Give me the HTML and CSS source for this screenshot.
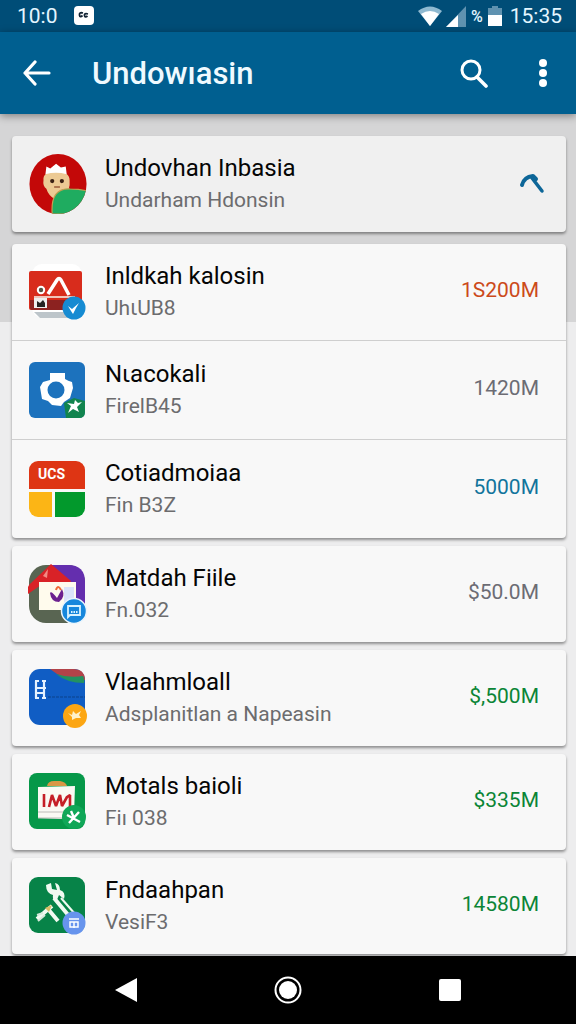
FILE: index.html
```
<!DOCTYPE html>
<html lang="id">
<head>
  <meta charset="UTF-8">
  <meta name="viewport" content="width=device-width, initial-scale=1">
  <title>Undowıasin</title>
  <link rel="stylesheet" href="styles.css">
</head>
<body>

  <div class="status">
    <span>10:0</span>
    <svg class="notif" width="20" height="20" viewBox="0 0 20 20">
      <rect width="20" height="19" rx="4" fill="#fff"/>
      <path d="M9 7q-4-1-3.500 2t3 .500M14 8q-4-1-3.500 1.500t3 .500" fill="none" stroke="#123" stroke-width="1.800"/>
    </svg>
    <span class="space"></span>
    <svg width="24" height="20" viewBox="0 0 24 20">
      <path d="M0 5Q12-4 24 5L12 20Z" fill="#8fb9d0"/>
      <path d="M3 8Q12 2 21 8L12 20Z" fill="#fff"/>
    </svg>
    <svg width="20" height="21" viewBox="0 0 20 21">
      <path d="M0 21L20 0V21Z" fill="#5f92b0"/>
      <path d="M0 21L12 9V21Z" fill="#fff"/>
    </svg>
    <span class="percent">%</span>
    <svg class="battery" width="14" height="20" viewBox="0 0 14 20">
      <path d="M0 2h4V0h6v2h4v18H0z" fill="#5f92b0"/>
      <path d="M0 9h14v11H0z" fill="#fff"/>
    </svg>
    <span>15:35</span>
  </div>

  <header class="appbar">
    <button class="icon-btn" aria-label="Kembali">
      <svg width="28" height="26" viewBox="0 0 28 26" fill="none" stroke="#fff" stroke-width="3.200" stroke-linecap="round" stroke-linejoin="round">
        <path d="M26 13H2M12 2L2 13L12 24"/>
      </svg>
    </button>
    <h1>Undowıasin</h1>
    <button class="icon-btn" aria-label="Cari">
      <svg width="28" height="30" viewBox="0 0 28 30" fill="none" stroke="#fff">
        <circle cx="11" cy="12" r="9" stroke-width="3"/>
        <path d="M17 19L26 28" stroke-width="3.600" stroke-linecap="round"/>
      </svg>
    </button>
    <button class="icon-btn more" aria-label="Menu">
      <svg width="8" height="28" viewBox="0 0 8 28" fill="#fff">
        <circle cx="4" cy="4" r="4"/><circle cx="4" cy="14" r="4"/><circle cx="4" cy="24" r="4"/>
      </svg>
    </button>
  </header>

  <main>
    <section class="card top">
      <div class="row">
        <svg class="logo" viewBox="0 0 60 62">
          <clipPath id="avatar"><ellipse cx="30" cy="31" rx="29.500" ry="31"/></clipPath>
          <g clip-path="url(#avatar)">
            <rect width="60" height="62" fill="#c30808"/>
            <path d="M15 27Q14 18 28 18T42 27Q43 38 36 43L27 47Q20 43 18 36Q14 33 15 27Z" fill="#ecca94"/>
            <path d="M17 21L18 13L22 15L28 10L33 14L38 13L39 21Q28 18 17 21Z" fill="#fff"/>
            <circle cx="24" cy="28" r="2.200" fill="#3a2114"/>
            <circle cx="34" cy="28" r="2.200" fill="#3a2114"/>
            <path d="M26 34H32" stroke="#9a5a3a" stroke-width="1.500"/>
            <path d="M24 62Q22 35 42 36Q51 36 60 38V62Z" fill="#1fac60" stroke="#c3a052" stroke-width="1.200"/>
          </g>
        </svg>
        <div class="text"><h2>Undovhan Inbasia</h2><p>Undarham Hdonsin</p></div>
        <svg class="pick" width="26" height="22" viewBox="0 0 26 22" fill="none" stroke="#0d6698" stroke-linecap="round">
          <path d="M3 12Q5 4 14 3L17 6" stroke-width="4" stroke-linejoin="round"/>
          <path d="M13 5L23 18" stroke-width="3.500"/>
        </svg>
      </div>
    </section>

    <section class="card group">
      <div class="row">
        <svg class="logo" viewBox="0 0 60 60">
          <rect x="4" y="2" width="50" height="54" rx="10" fill="#fff"/>
          <path d="M6 50H50L44 56H12Z" fill="#bdc5ca"/>
          <rect x="1" y="9" width="53" height="39" rx="2" fill="#d82c1c"/>
          <path d="M2 38H54V46Q54 48 52 48H4Q2 48 2 46Z" fill="#8c2220"/>
          <path d="M6 35H47" stroke="#efc5ba" stroke-width="2"/>
          <path d="M20 32L29 18Q31 15 33 18L41 33" fill="none" stroke="#fff" stroke-width="3.500" stroke-linejoin="round"/>
          <circle cx="13" cy="28" r="3.200" fill="#554" stroke="#fff" stroke-width="2"/>
          <rect x="6" y="36" width="13" height="10" fill="#eee"/>
          <path d="M9 39l3 2 3-3 2 3v4H9z" fill="#222"/>
          <circle cx="46" cy="46" r="11.500" fill="#168bd2"/>
          <path d="M40 44L44 47L51 41L48 46L45 52L43 49Z" fill="#fff"/>
        </svg>
        <div class="text"><h2>Inldkah kalosin</h2><p>UhɩUB8</p></div>
        <span class="amount orange">1S200M</span>
      </div>
      <div class="row">
        <svg class="logo" viewBox="0 0 60 60">
          <rect x="1" y="2" width="56" height="56" rx="6" fill="#1c72bd"/>
          <path d="M22 13H37V19Q40 21 44 22L45 28L42 38L36 42L33 46L24 45L20 41L14 39L12 27L15 22L22 20Z" fill="#fff"/>
          <circle cx="28" cy="30" r="8.500" fill="#1c72bd"/>
          <path d="M36 43L46 38L57 41V52Q57 58 51 58H38Z" fill="#11844e"/>
          <path d="M39 43L46 44L47 40L50 43L54 42L49 47L51 52L45 49L40 53L43 46Z" fill="#fff"/>
        </svg>
        <div class="text"><h2>Nɩacokali</h2><p>FirelB45</p></div>
        <span class="amount">1420M</span>
      </div>
      <div class="row">
        <svg class="logo" viewBox="0 0 60 60">
          <clipPath id="tile"><rect x="1" y="2" width="56" height="56" rx="9"/></clipPath>
          <g clip-path="url(#tile)">
            <rect width="60" height="30" fill="#de3514"/>
            <rect y="33" width="24" height="27" fill="#fcb515"/>
            <rect x="27" y="33" width="33" height="27" fill="#02992c"/>
          </g>
          <text class="logo-text" x="10" y="20">UCS</text>
        </svg>
        <div class="text"><h2>Cotiadmoiaa</h2><p>Fin B3Z</p></div>
        <span class="amount blue">5000M</span>
      </div>
    </section>

    <section class="card">
      <div class="row">
        <svg class="logo" viewBox="0 0 60 60">
          <rect x="1" y="1" width="56" height="58" rx="17" fill="#596552"/>
          <path d="M24 1H40Q57 1 57 18V46H30Z" fill="#642eae"/>
          <path d="M23 0L43 17L41 21H13L0 30Q-2 23 3 19Z" fill="#d92227"/>
          <path d="M15 12L20 5L19 14Z" fill="#f28b83"/>
          <rect x="11" y="18" width="37" height="28" fill="#fffbed"/>
          <rect x="36" y="23" width="10" height="17" fill="#dbe4fa"/>
          <path d="M22 29Q23 26 29 34L34 25Q38 33 31 38Q23 38 22 29Z" fill="#6d218f"/>
          <path d="M28 26Q30 20 33 26" fill="none" stroke="#ef6b38" stroke-width="2"/>
          <circle cx="46" cy="47" r="12.500" fill="#1687dc" stroke="#e9f5fc" stroke-width="1.500"/>
          <path d="M40 42H52V51H42L40 53Z" fill="none" stroke="#d8f3ff" stroke-width="1.800"/>
          <path d="M43 48H50" stroke="#d8f3ff" stroke-width="2" stroke-dasharray="1.500 1"/>
        </svg>
        <div class="text"><h2>Matdah Fiile</h2><p>Fn.032</p></div>
        <span class="amount">$50.0M</span>
      </div>
    </section>

    <section class="card">
      <div class="row">
        <svg class="logo" viewBox="0 0 60 60">
          <rect x="1" y="1" width="56" height="56" rx="11" fill="#105dc4"/>
          <path d="M22 1H46Q56 1 57 11V12Q36 13 22 1Z" fill="#b34349"/>
          <path d="M28 6Q40 10 55 8Q57 12 56 15Q39 15 28 6Z" fill="#239260"/>
          <path d="M8 13V30M16 12V30M7 13H11M14 13H18M7 20H18M7 25H17M7 30H11M14 30H18" stroke="#e5f2ff" stroke-width="2.200"/>
          <path d="M20 29H57" stroke="#0b438b" stroke-dasharray="3 1"/>
          <circle cx="47" cy="48" r="12" fill="#fca613"/>
          <path d="M40 45L44 47L45 43L48 46L53 43L51 47L53 50L48 50L44 52L44 49Z" fill="#fff1ca"/>
        </svg>
        <div class="text"><h2>Vlaahmloall</h2><p>Adsplanitlan a Napeasin</p></div>
        <span class="amount green">$,500M</span>
      </div>
    </section>

    <section class="card">
      <div class="row">
        <svg class="logo" viewBox="0 0 60 60">
          <rect x="1" y="1" width="56" height="56" rx="8" fill="#069849"/>
          <path d="M10 15L47 14L46 43L33 47L10 46Z" fill="#faf9f3"/>
          <path d="M10 40H40M10 46H36" stroke="#bdbcb8"/>
          <path d="M19 14Q20 9 26 9H32Q38 10 39 14Z" fill="#d99745"/>
          <path d="M16 22V35M21 35L24 23L28 34L32 23L34 34L39 25L42 23V35" fill="none" stroke="#c51f27" stroke-width="2.600" stroke-linejoin="bevel"/>
          <circle cx="46" cy="45" r="12" fill="#10a758"/>
          <path d="M39 43L52 50M41 51L51 40M43 39L46 46" stroke="#fff" stroke-width="2.400"/>
        </svg>
        <div class="text"><h2>Motals baioli</h2><p>Fiı 038</p></div>
        <span class="amount green">$335M</span>
      </div>
    </section>

    <section class="card">
      <div class="row">
        <svg class="logo" viewBox="0 0 60 60">
          <rect x="1" y="1" width="56" height="56" rx="9" fill="#078348"/>
          <path d="M18 9L23 7L24 13L29 14L27 7Q32 8 32 14Q38 16 36 23L31 19L28 26Q24 24 25 19Q18 17 18 9Z" fill="#f1faf1"/>
          <path d="M26 22L46 46M24 30L18 35L9 43M20 33L30 45" stroke="#f1faf1" stroke-width="4" fill="none"/>
          <path d="M33 22L47 38" stroke="#f1faf1" stroke-width="2"/>
          <path d="M17 32L24 29L21 36Z" fill="#d9bd65"/>
          <path d="M9 39L15 37M10 45L17 39" stroke="#d7e9db" stroke-width="2"/>
          <circle cx="46" cy="47" r="11.500" fill="#6794ed"/>
          <path d="M41 43H51M42 46H50V51H42ZM46 46V52" fill="none" stroke="#fff" stroke-width="1.500"/>
        </svg>
        <div class="text"><h2>Fndaahpan</h2><p>VesiF3</p></div>
        <span class="amount green">14580M</span>
      </div>
    </section>
  </main>

  <nav class="navbar">
    <button class="nav-btn" aria-label="Kembali"><svg width="22" height="26" viewBox="0 0 22 26"><path d="M0 13L22 1V25Z" fill="#fff"/></svg></button>
    <button class="nav-btn" aria-label="Beranda"><svg width="28" height="28" viewBox="0 0 28 28"><circle cx="14" cy="14" r="12.500" fill="none" stroke="#fff" stroke-width="2"/><circle cx="14" cy="14" r="9" fill="#fff"/></svg></button>
    <button class="nav-btn" aria-label="Terbaru"><svg width="22" height="22" viewBox="0 0 22 22"><rect width="22" height="22" rx="2" fill="#fff"/></svg></button>
  </nav>

</body>
</html>
```
FILE: styles.css
```
* {
  box-sizing: border-box;
}

body {
  margin: 0;
  min-height: 100vh;
  display: flex;
  flex-direction: column;
  background: #ededee;
  font-family: Roboto, "Noto Sans", sans-serif;
}

h1, h2, p {
  margin: 0;
  font-weight: 400;
}

button {
  padding: 0;
  border: none;
  background: none;
  cursor: pointer;
}

svg {
  display: block;
  flex: none;
}

.status {
  display: flex;
  align-items: center;
  height: 32px;
  padding: 0 14px 0 17px;
  background: #004d77;
  color: #e4f6ff;
  font-size: 21px;
}

.notif {
  margin-left: 16px;
}

.space {
  flex: 1;
}

.status svg + svg {
  margin-left: 4px;
}

.percent {
  margin: 0 5px;
  font-size: 16px;
  font-weight: 500;
}

.battery {
  margin-right: 8px;
}

.appbar {
  position: relative;
  display: flex;
  align-items: center;
  height: 82px;
  padding: 0 13px 0 17px;
  background: #005f90;
  box-shadow: 0 2px 8px rgba(0, 0, 0, 0.4);
}

.appbar h1 {
  flex: 1;
  margin-left: 35px;
  color: #effaff;
  font-size: 31px;
  font-weight: 500;
}

.icon-btn {
  display: flex;
  align-items: center;
  justify-content: center;
  width: 40px;
  height: 48px;
}

.more {
  margin-left: 29px;
}

main {
  flex: 1;
  display: flex;
  flex-direction: column;
  gap: 8px;
  padding: 22px 10px 0 12px;
  background: linear-gradient(#d5d5d6 208px, #ededee 208px);
}

.card {
  border-radius: 4px;
  background: #f8f8f8;
  box-shadow: 0 2px 3px rgba(0, 0, 0, 0.4);
}

.top {
  margin-bottom: 4px;
  background: #f0f0f0;
}

.row {
  display: flex;
  align-items: center;
  min-height: 96px;
  padding: 0 27px 0 16px;
}

.group .row + .row {
  min-height: 99px;
  border-top: 1px solid #cfcfcf;
}

.logo {
  width: 60px;
  height: 60px;
}

.logo-text {
  fill: #fff;
  font-size: 14px;
  font-weight: 700;
}

.text {
  flex: 1;
  min-width: 0;
  margin-left: 17px;
}

.text h2 {
  color: #050505;
  font-size: 24px;
  line-height: 32px;
}

.text p {
  color: #6c6c6e;
  font-size: 21px;
  line-height: 32px;
}

.amount {
  padding-bottom: 4px;
  color: #6c6c74;
  font-size: 21px;
}

.orange {
  color: #cc4a1b;
}

.blue {
  color: #12749c;
}

.green {
  color: #0b8536;
}

.pick {
  margin-right: -6px;
}

.navbar {
  position: sticky;
  bottom: 0;
  display: flex;
  height: 68px;
  padding: 0 45px;
  background: #000;
}

.nav-btn {
  flex: 1;
  display: flex;
  align-items: center;
  justify-content: center;
}
```
